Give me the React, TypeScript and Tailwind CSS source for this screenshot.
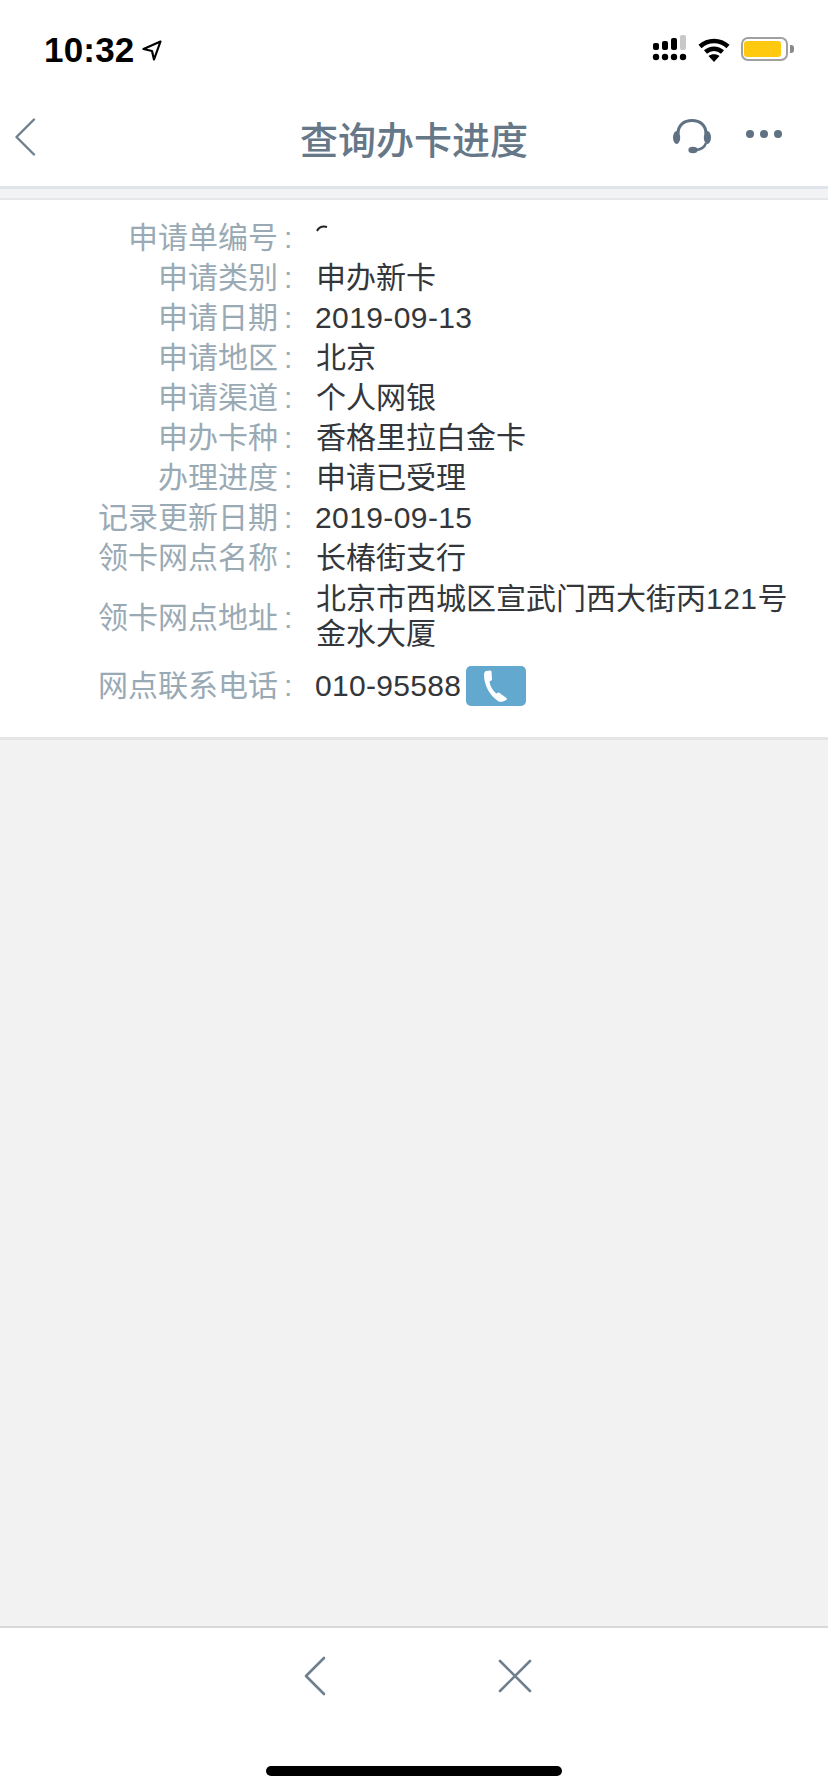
const SANS = "font-['Liberation_Sans','Noto_Sans_CJK_SC',sans-serif]";

const rows: [string, string][] = [
  ['申请类别', '申办新卡'],
  ['申请日期', '2019-09-13'],
  ['申请地区', '北京'],
  ['申请渠道', '个人网银'],
  ['申办卡种', '香格里拉白金卡'],
  ['办理进度', '申请已受理'],
  ['记录更新日期', '2019-09-15'],
  ['领卡网点名称', '长椿街支行'],
];

function Label({ children }: { children: string }) {
  return (
    <div className="flex w-[315px] shrink-0 items-center justify-end pr-[23px] text-[#9aaab5]">
      <span>{children}</span>
      <span className="ml-[6px] w-[8px] text-center">:</span>
    </div>
  );
}

function Row({ label, value }: { label: string; value: string }) {
  const numeric = /^\d/.test(value);
  return (
    <div className="flex h-[40px] items-center">
      <Label>{label}</Label>
      <div className={numeric ? 'tracking-[0.4px] text-[#33363a]' : 'pl-[1px] text-[#33363a]'}>{value}</div>
    </div>
  );
}

export default function App() {
  return (
    <div className={`flex h-[1792px] w-[828px] flex-col bg-[#f2f2f3] ${SANS}`}>
      <div className="flex h-[100px] shrink-0 items-start justify-between bg-white pl-[44px] pr-[34px] pt-[30px]">
        <div className="flex items-center gap-[7px]">
          <span className="text-[35px] font-bold leading-[40px] tracking-[0.2px] text-black">10:32</span>
          <svg width="20" height="21" viewBox="0 0 20 21" fill="none" stroke="#000" strokeWidth="2.2" strokeLinejoin="round">
            <path d="M18.5 1.5 L1.5 9 L10 11 L12 19.5 Z" />
          </svg>
        </div>
        <div className="flex items-start pt-[5px]">
          <svg width="36" height="26" viewBox="0 0 36 26" fill="#000">
            <circle cx="4" cy="22" r="3.2" /><circle cx="13" cy="22" r="3.2" /><circle cx="22" cy="22" r="3.2" /><circle cx="31" cy="22" r="3.2" />
            <rect x="1" y="8" width="6" height="7" rx="2" /><rect x="10" y="6" width="6" height="9" rx="2" /><rect x="19" y="3" width="6" height="12" rx="2" />
            <rect x="28" y="0" width="6" height="15" rx="2" fill="#c8c8c8" />
          </svg>
          <svg className="ml-[10px] mt-[3px]" width="32" height="24" viewBox="0 0 32 24" fill="none" stroke="#000" strokeWidth="4.5">
            <path d="M2 8.5 C10 1 22 1 30 8.5" />
            <path d="M7.5 14 C12.5 9.5 19.5 9.5 24.5 14" />
            <path d="M16 24 L10.5 18 C13.5 15.5 18.5 15.5 21.5 18 Z" fill="#000" stroke="none" />
          </svg>
          <div className="ml-[11px] mt-[2px] flex items-center">
            <div className="flex h-[24px] w-[47px] items-center rounded-[7px] border-2 border-[#a0a0a0] pl-[1px]">
              <div className="h-[16px] w-[37px] rounded-[3px] bg-[#fec90f]" />
            </div>
            <div className="ml-[2px] h-[8px] w-[4px] rounded-r-[3px] bg-[#8a8a8a]" />
          </div>
        </div>
      </div>

      <div className="relative flex h-[86px] shrink-0 items-center justify-center bg-white">
        <svg className="absolute left-[14px] top-[18px]" width="22" height="38" viewBox="0 0 22 38" fill="none" stroke="#6f7f8d" strokeWidth="2.4" strokeLinecap="round" strokeLinejoin="round">
          <path d="M20 1.5 L2.5 19 L20 36.5" />
        </svg>
        <h1 className="pb-[4px] text-[38px] font-medium leading-[44px] text-[#667788]">查询办卡进度</h1>
        <svg className="absolute left-[673px] top-[19px]" width="38" height="36" viewBox="0 0 38 36" fill="none">
          <path d="M5 15 C5 6 11 1.5 19 1.5 C27 1.5 33 6 33 15" stroke="#5f7183" strokeWidth="3" />
          <ellipse cx="3.6" cy="18.5" rx="3.6" ry="6.5" fill="#5f7183" />
          <ellipse cx="34.4" cy="18.5" rx="3.6" ry="6.5" fill="#5f7183" />
          <path d="M33 24 C31.5 28.5 28 30.5 23 31" stroke="#5f7183" strokeWidth="2.4" />
          <ellipse cx="20" cy="31" rx="4.6" ry="3.2" fill="#5f7183" />
        </svg>
        <div className="absolute left-[746px] top-[30px] flex gap-[6px]">
          <div className="h-[8px] w-[8px] rounded-full bg-[#5f7183]" />
          <div className="h-[8px] w-[8px] rounded-full bg-[#5f7183]" />
          <div className="h-[8px] w-[8px] rounded-full bg-[#5f7183]" />
        </div>
      </div>

      <div className="h-[3px] shrink-0 bg-[#dfe5ea]" />
      <div className="h-[9px] shrink-0 bg-[#f2f3f5]" />
      <div className="h-[2px] shrink-0 bg-[#e6e7e8]" />

      <div className="shrink-0 bg-white pb-[23px] pt-[18px] text-[30px] leading-[40px]">
        <div className="flex h-[40px] items-center">
          <Label>申请单编号</Label>
          <svg className="-mt-[18px]" width="14" height="8" viewBox="0 0 14 8" fill="none" stroke="#222" strokeWidth="2">
            <path d="M2 6 C4 2 8 1 12 2" />
          </svg>
        </div>
        {rows.map(([label, value]) => (
          <Row key={label} label={label} value={value} />
        ))}
        <div className="flex h-[80px] items-center">
          <Label>领卡网点地址</Label>
          <div className="w-[490px] pb-[4px] pl-[1px] leading-[35px] text-[#33363a]">
            北京市西城区宣武门西大街丙<span className="tracking-[0.5px]">121</span>号<br />金水大厦
          </div>
        </div>
        <div className="flex h-[56px] items-center">
          <Label>网点联系电话</Label>
          <div className="tracking-[0.3px] text-[#33363a]">010-95588</div>
          <div className="ml-[5px] flex h-[40px] w-[60px] items-center justify-center rounded-[5px] bg-[#62a8cf]">
            <svg width="28" height="32" viewBox="0 0 28 32" fill="#fff">
              <path d="M4 1 L8 0.5 C9 0.5 9.5 1 9.5 2 L10 9 C10 10 9.5 10.5 8.5 11 L7.5 11.5 C8 16 11 21 14.5 23.5 L16 22.8 C17 22.4 17.6 22.6 18.2 23.4 L24.5 28 C25 28.8 25 29.4 24.3 30 L21 31.5 C18.8 32 17.5 32 16 31 C8 26 2 15 2 5 C2 3 2.6 1.6 4 1 Z" />
            </svg>
          </div>
        </div>
      </div>

      <div className="h-[3px] shrink-0 bg-[#e4e5e6]" />

      <div className="flex-1" />

      <div className="h-[2px] shrink-0 bg-[#d8d9da]" />
      <div className="relative flex h-[164px] shrink-0 justify-center bg-white">
        <svg className="absolute left-[304px] top-[28px]" width="24" height="40" viewBox="0 0 24 40" fill="none" stroke="#6f7f8d" strokeWidth="2.6" strokeLinecap="round" strokeLinejoin="round">
          <path d="M20 2 L2 20 L20 38" />
        </svg>
        <svg className="absolute left-[497px] top-[31px]" width="36" height="34" viewBox="0 0 36 34" fill="none" stroke="#6f7f8d" strokeWidth="2.6" strokeLinecap="round">
          <path d="M3 2 L33 32 M33 2 L3 32" />
        </svg>
        <div className="absolute left-[266px] top-[138px] h-[10px] w-[296px] rounded-full bg-black" />
      </div>
    </div>
  );
}
